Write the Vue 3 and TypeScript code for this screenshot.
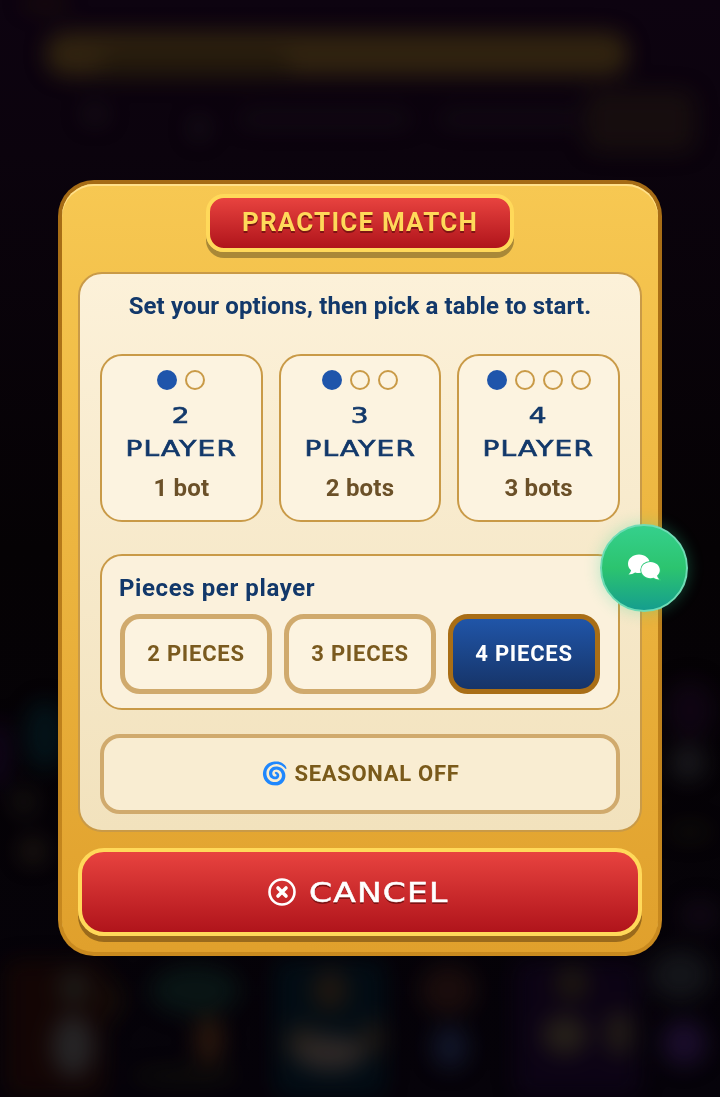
<template>
  <div class="screen">
    <!-- blurred game lobby behind the dialog -->
    <div class="backdrop">
      <span v-for="(b, i) in blobs" :key="i" class="blob" :style="blobStyle(b)"></span>
    </div>

    <section class="modal">
      <h1 class="title">PRACTICE MATCH</h1>

      <div class="panel">
        <p class="hint">Set your options, then pick a table to start.</p>

        <div class="modes">
          <div v-for="m in modes" :key="m.count" class="mode">
            <div class="dots">
              <span v-for="n in m.count" :key="n" class="dot" :class="{ on: n === 1 }"></span>
            </div>
            <div class="mode-name">{{ m.count }}<br />PLAYER</div>
            <div class="mode-bots">{{ m.bots }}</div>
          </div>
        </div>

        <div class="pieces">
          <h2>Pieces per player</h2>
          <div class="piece-row">
            <button v-for="p in pieces" :key="p" class="piece" :class="{ active: p === 4 }">{{ p }} PIECES</button>
          </div>
        </div>

        <button class="seasonal"><span class="swirl">🌀</span> SEASONAL OFF</button>
      </div>

      <button class="cancel">
        <svg width="28" height="28" viewBox="0 0 28 28" fill="none">
          <circle cx="14" cy="14" r="12.5" stroke="#fff" stroke-width="2.6" />
          <path d="M10 10l8 8M18 10l-8 8" stroke="#fff" stroke-width="3.6" stroke-linecap="round" />
        </svg>
        <span class="cancel-label">CANCEL</span>
      </button>

      <button class="chat" aria-label="Chat">
        <svg width="34" height="28" viewBox="0 0 34 28">
          <path d="M12 0.500C6 0.500 1 4.500 1 9.800c0 2.600 1.200 4.900 3.100 6.500-.3 1.500-1.200 2.900-2.600 4.100 2.600 0 4.800-.7 6.600-2 1.200.4 2.500.6 3.900.6 6 0 11-4 11-9.200S18 0.500 12 0.500z" fill="#fff" />
          <path d="M23.500 8c-5.200 0-9.300 3.600-9.300 8.100s4.100 8.100 9.300 8.100c1.100 0 2.200-.2 3.200-.5 1.500 1 3.400 1.700 5.600 1.700-1.100-1-1.900-2.300-2.300-3.600 1.700-1.400 2.800-3.400 2.800-5.700 0-4.500-4.100-8.100-9.300-8.100z" fill="#fff" stroke="#2fc97a" stroke-width="2" paint-order="stroke" />
        </svg>
      </button>
    </section>
  </div>
</template>

<script setup lang="ts">
interface Blob {
  x: number
  y: number
  w: number
  h: number
  c: string
  r?: string
}

const modes = [
  { count: 2, bots: '1 bot' },
  { count: 3, bots: '2 bots' },
  { count: 4, bots: '3 bots' },
]
const pieces = [2, 3, 4]

const blobs: Blob[] = [
  // top bar and the row under it
  { x: 46, y: 32, w: 582, h: 44, c: '#3a2c10', r: '20px' },
  { x: 100, y: 50, w: 190, h: 28, c: '#2a200c', r: '14px' },
  { x: 20, y: 0, w: 50, h: 8, c: '#2a1a08' },
  { x: 82, y: 104, w: 26, h: 20, c: '#1a1219' },
  { x: 190, y: 116, w: 18, h: 24, c: '#1a141c' },
  { x: 240, y: 112, w: 170, h: 14, c: '#150d16', r: '7px' },
  { x: 440, y: 112, w: 140, h: 14, c: '#150d16', r: '7px' },
  { x: 585, y: 90, w: 110, h: 62, c: '#1a110f', r: '14px' },
  // sides
  { x: 25, y: 700, w: 40, h: 70, c: '#04181e' },
  { x: -14, y: 720, w: 24, h: 70, c: '#140620' },
  { x: 12, y: 790, w: 24, h: 24, c: '#1c1813' },
  { x: 20, y: 838, w: 26, h: 26, c: '#241c14' },
  { x: 665, y: 680, w: 50, h: 60, c: '#120616' },
  { x: 670, y: 745, w: 36, h: 36, c: '#1e1e22' },
  { x: 668, y: 825, w: 44, h: 14, c: '#14130a' },
  { x: 680, y: 900, w: 40, h: 30, c: '#140a18' },
  // characters along the bottom
  { x: 5, y: 960, w: 100, h: 137, c: '#170704', r: '10px' },
  { x: 58, y: 970, w: 32, h: 36, c: '#23211c' },
  { x: 52, y: 1015, w: 42, h: 62, c: '#2e2e2e' },
  { x: 100, y: 980, w: 22, h: 40, c: '#1a1008' },
  { x: 150, y: 965, w: 90, h: 50, c: '#0a1a18' },
  { x: 195, y: 1015, w: 28, h: 50, c: '#331d0e' },
  { x: 130, y: 1070, w: 110, h: 12, c: '#14140a' },
  { x: 275, y: 960, w: 110, h: 137, c: '#021018', r: '10px' },
  { x: 312, y: 968, w: 36, h: 44, c: '#241c14' },
  { x: 285, y: 1025, w: 36, h: 36, c: '#29241c' },
  { x: 295, y: 1035, w: 70, h: 36, c: '#38322e' },
  { x: 360, y: 1020, w: 24, h: 36, c: '#241f18' },
  { x: 420, y: 965, w: 56, h: 50, c: '#20100e' },
  { x: 432, y: 1025, w: 36, h: 44, c: '#141a30' },
  { x: 515, y: 960, w: 125, h: 137, c: '#0e0418', r: '10px' },
  { x: 555, y: 965, w: 34, h: 36, c: '#231d14' },
  { x: 542, y: 1015, w: 46, h: 40, c: '#2e281e' },
  { x: 605, y: 1010, w: 28, h: 46, c: '#2a241a' },
  { x: 662, y: 1020, w: 44, h: 46, c: '#201034' },
  { x: 650, y: 950, w: 60, h: 50, c: '#181a1e' },
]

function blobStyle(b: Blob) {
  return {
    left: b.x + 'px',
    top: b.y + 'px',
    width: b.w + 'px',
    height: b.h + 'px',
    background: b.c,
    borderRadius: b.r ?? '50%',
  }
}
</script>

<style>
html,
body {
  margin: 0;
  background: #050204;
}
</style>

<style scoped>
.screen {
  position: relative;
  height: 1097px;
  overflow: hidden;
  background: linear-gradient(180deg, #0d0310 0%, #0b030d 14%, #050204 50%, #06030a 100%);
  display: flex;
  justify-content: center;
  font-family: Roboto, "Liberation Sans", sans-serif;
}

.backdrop {
  position: absolute;
  inset: 0;
  filter: blur(11px);
  opacity: 0.8;
}
.blob {
  position: absolute;
}

.modal {
  position: relative;
  box-sizing: border-box;
  width: 604px;
  height: 776px;
  margin-top: 180px;
  padding: 10px 16px 0;
  border: 4px solid transparent;
  border-radius: 36px;
  background: linear-gradient(180deg, #f7c852 0%, #e0a02c 100%) padding-box,
    linear-gradient(180deg, #a56b15 0%, #c98a1f 100%) border-box;
  box-shadow: inset 0 2px 0 #ffe08a;
  display: flex;
  flex-direction: column;
  align-items: center;
}

.title {
  box-sizing: border-box;
  width: 308px;
  height: 58px;
  margin: 0;
  border: 4px solid #ffd95a;
  border-radius: 18px;
  background: linear-gradient(180deg, #e8433f 0%, #b0141b 100%);
  box-shadow: 0 6px 0 #a98837;
  color: #ffd95a;
  font-size: 26px;
  font-weight: 700;
  letter-spacing: 1.2px;
  line-height: 48px;
  text-align: center;
  text-shadow: 0 2px 0 #7d1414;
}

.panel {
  box-sizing: border-box;
  width: 564px;
  height: 560px;
  margin-top: 20px;
  padding: 17px 20px 0;
  border: 2px solid #c99a47;
  border-radius: 24px;
  background: linear-gradient(180deg, #fcf1d9 0%, #f2e2bd 100%);
}

.hint {
  margin: 0;
  color: #12386a;
  font-size: 24px;
  font-weight: 700;
  letter-spacing: 0.13px;
  line-height: 30px;
  text-align: center;
}

.modes {
  display: grid;
  grid-template-columns: repeat(3, 1fr);
  gap: 16px;
  margin-top: 33px;
}
.mode {
  box-sizing: border-box;
  height: 168px;
  padding-top: 14px;
  border: 2px solid #c99a47;
  border-radius: 22px;
  background: #fcf3e0;
  text-align: center;
}
.dots {
  display: flex;
  justify-content: center;
  gap: 8px;
  height: 20px;
}
.dot {
  box-sizing: border-box;
  width: 20px;
  height: 20px;
  border: 2px solid #c99a47;
  border-radius: 50%;
}
.dot.on {
  border-color: #1f55ab;
  background: #1f55ab;
}
/* no squared techno face is installed, so DejaVu is stretched to the same width */
.mode-name {
  margin-top: 9px;
  color: #12386a;
  font-family: "DejaVu Sans", sans-serif;
  font-size: 22px;
  line-height: 33px;
  letter-spacing: 1px;
  -webkit-text-stroke: 0.7px #12386a;
  transform: scaleX(1.27);
}
.mode-bots {
  margin-top: 8px;
  color: #6b5028;
  font-size: 24px;
  font-weight: 700;
  letter-spacing: 0.2px;
  line-height: 30px;
}

.pieces {
  box-sizing: border-box;
  height: 156px;
  margin-top: 32px;
  padding: 17px 18px 0;
  border: 2px solid #c99a47;
  border-radius: 22px;
  background: #fbf1dc;
}
.pieces h2 {
  margin: 0 0 0 -1px;
  color: #12386a;
  font-size: 24px;
  font-weight: 700;
  letter-spacing: 0.6px;
  line-height: 30px;
}
.piece-row {
  display: grid;
  grid-template-columns: repeat(3, 152px);
  justify-content: space-between;
  margin-top: 11px;
}
button {
  font-family: inherit;
  cursor: pointer;
}
.piece {
  box-sizing: border-box;
  height: 80px;
  padding-bottom: 3px;
  border: 5px solid #d0aa6d;
  border-radius: 20px;
  background: #fcf3e0;
  color: #7a5a1f;
  font-size: 22px;
  font-weight: 700;
  letter-spacing: 0.75px;
}
.piece.active {
  border-color: #a96e16;
  background: linear-gradient(180deg, #2055a8 0%, #163468 100%);
  color: #fff;
}

.seasonal {
  display: block;
  box-sizing: border-box;
  width: 100%;
  height: 80px;
  margin-top: 24px;
  padding-bottom: 2px;
  border: 4px solid #d0aa6d;
  border-radius: 20px;
  background: #f9edd2;
  color: #7a5a1a;
  font-size: 22px;
  font-weight: 700;
  letter-spacing: 0.7px;
}
.swirl {
  color: #2a86e8;
}

.cancel {
  box-sizing: border-box;
  width: 564px;
  height: 88px;
  margin-top: 16px;
  padding: 0 3px 0 0;
  border: 4px solid #ffd95a;
  border-radius: 26px;
  background: linear-gradient(180deg, #e8433f 0%, #b0141b 100%);
  box-shadow: 0 6px 0 #9a6a1c;
  color: #fff;
  display: flex;
  align-items: center;
  justify-content: center;
  gap: 13px;
}
.cancel-label {
  width: 140px;
  font-family: "DejaVu Sans", sans-serif;
  font-size: 27px;
  letter-spacing: 1px;
  white-space: nowrap;
  text-align: left;
  -webkit-text-stroke: 0.5px #fff;
  text-shadow: 0 2px 0 #7d1414;
  transform: scaleX(1.22);
  transform-origin: left center;
}

.chat {
  position: absolute;
  left: 538px;
  top: 340px;
  box-sizing: border-box;
  width: 88px;
  height: 88px;
  padding: 0;
  border: 2px solid #6fdcb5;
  border-radius: 50%;
  background: linear-gradient(180deg, #35d08c 0%, #2cc46f 50%, #159e8e 100%);
  box-shadow: 0 0 16px rgba(45, 215, 150, 0.32);
  display: flex;
  align-items: center;
  justify-content: center;
}
</style>
